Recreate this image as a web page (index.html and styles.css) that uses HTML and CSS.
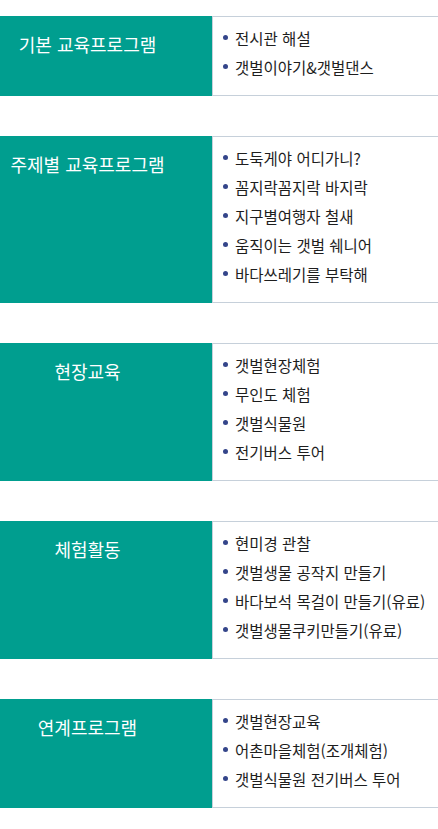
FILE: index.html
```html
<!DOCTYPE html>
<html lang="ko">
<head>
<meta charset="utf-8">
<link rel="stylesheet" href="styles.css">
</head>
<body>
<div class="programs">
  <section class="program">
    <h3 class="program-title">기본 교육프로그램</h3>
    <ul class="program-list">
      <li>전시관 해설</li>
      <li>갯벌이야기&amp;갯벌댄스</li>
    </ul>
  </section>
  <section class="program">
    <h3 class="program-title">주제별 교육프로그램</h3>
    <ul class="program-list">
      <li>도둑게야 어디가니?</li>
      <li>꼼지락꼼지락 바지락</li>
      <li>지구별여행자 철새</li>
      <li>움직이는 갯벌 쉐니어</li>
      <li>바다쓰레기를 부탁해</li>
    </ul>
  </section>
  <section class="program">
    <h3 class="program-title">현장교육</h3>
    <ul class="program-list">
      <li>갯벌현장체험</li>
      <li>무인도 체험</li>
      <li>갯벌식물원</li>
      <li>전기버스 투어</li>
    </ul>
  </section>
  <section class="program">
    <h3 class="program-title">체험활동</h3>
    <ul class="program-list">
      <li>현미경 관찰</li>
      <li>갯벌생물 공작지 만들기</li>
      <li>바다보석 목걸이 만들기(유료)</li>
      <li>갯벌생물쿠키만들기(유료)</li>
    </ul>
  </section>
  <section class="program">
    <h3 class="program-title">연계프로그램</h3>
    <ul class="program-list">
      <li>갯벌현장교육</li>
      <li>어촌마을체험(조개체험)</li>
      <li>갯벌식물원 전기버스 투어</li>
    </ul>
  </section>
</div>
</body>
</html>
```

FILE: styles.css
```css
html, body {
  margin: 0;
  padding: 0;
  background: #ffffff;
}
body {
  font-family: "Noto Sans CJK KR", "Noto Sans", sans-serif;
  color: #1e1e1e;
}
.programs {
  display: flex;
  flex-direction: column;
  gap: 40px;
  padding: 16px 0 21px;
}
.program {
  display: flex;
  align-items: stretch;
}
.program-title {
  flex: 0 0 212px;
  box-sizing: border-box;
  margin: 0;
  padding: 14px 37px 0 0;
  background: #009e8f;
  color: #ffffff;
  font-size: 18px;
  font-weight: 400;
  line-height: 28px;
  text-align: center;
}
.program-list {
  flex: 1 1 auto;
  margin: 0;
  list-style: none;
  padding: 7px 0 13px 10px;
  border-top: 1px solid #c6d0da;
  border-bottom: 1px solid #c6d0da;
  border-left: 1px solid #c6d0da;
}
.program-list li {
  position: relative;
  font-size: 15.5px;
  line-height: 29px;
  padding-left: 12px;
}
.program-list li::before {
  content: "";
  position: absolute;
  left: 0;
  top: 11px;
  width: 5px;
  height: 5px;
  border-radius: 50%;
  background: #34458a;
}
```
